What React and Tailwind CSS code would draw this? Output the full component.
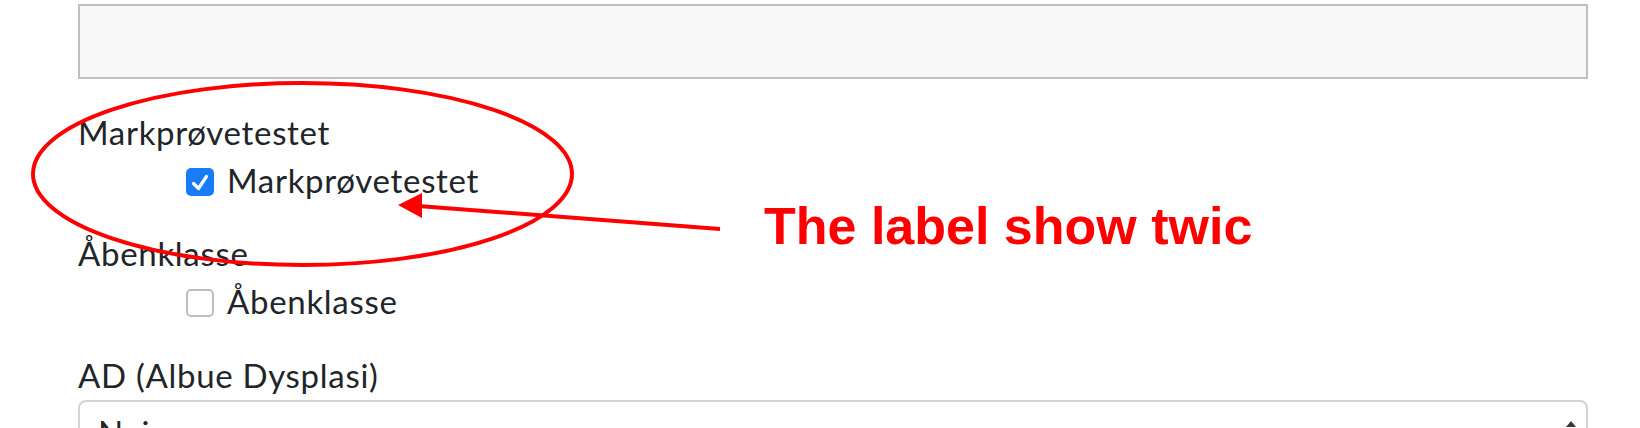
import React from "react";

const FIELDS = [
  { id: "markprove", label: "Markprøvetestet", checked: true },
  { id: "abenklasse", label: "Åbenklasse", checked: false },
];

function CheckBox({ checked }) {
  if (checked) {
    return (
      <span className="mt-[12px] w-[28px] h-[28px] shrink-0 rounded-[5px] bg-[#1a7cf5] flex items-center justify-center">
        <svg width="28" height="28" viewBox="0 0 28 28" fill="none">
          <path d="M7.5 15.5 L12.5 20.5 L20.5 8.5" stroke="#fff" strokeWidth="3.2" strokeLinecap="round" strokeLinejoin="round" />
        </svg>
      </span>
    );
  }
  return <span className="mt-[12px] w-[28px] h-[28px] shrink-0 rounded-[5px] border-2 border-[#bdbdbd] bg-white" />;
}

export default function App() {
  return (
    <div className="relative w-[1640px] h-[428px] overflow-hidden bg-white text-[#212529] font-['Lato',sans-serif]">
      {/* ── Form ── */}
      <div className="pl-[78px] pr-[52px] pt-[4px]">
        <div className="h-[75px] border-2 border-[#c0c0c0] bg-[#f8f8f8]" />

        {FIELDS.map((f, i) => (
          <div key={f.id} className={i === 0 ? "mt-[29px]" : "mt-[25px]"}>
            <div className="text-[33px] tracking-[0.7px] leading-[48px]">{f.label}</div>
            <label className="flex items-start gap-[13px] pl-[108px] text-[33px] tracking-[0.7px] leading-[48px]">
              <CheckBox checked={f.checked} />
              <span>{f.label}</span>
            </label>
          </div>
        ))}

        <div className="mt-[26px] text-[33px] tracking-[0.7px] leading-[48px]">AD (Albue Dysplasi)</div>
        <div className="mt-[1px] h-[76px] border-2 border-[#ced4da] rounded-[8px] pl-[18px] pr-[10px] pt-[6px] flex items-start justify-between">
          <span className="text-[33px] tracking-[0.7px] leading-[48px]">Nej</span>
          <svg width="10" height="24" viewBox="0 0 10 24" className="mt-[13px]">
            <path d="M5 0 L10 6 L0 6 Z" fill="#343a40" />
            <path d="M0 12 L10 12 L5 18 Z" fill="#343a40" />
          </svg>
        </div>
      </div>

      {/* ── Annotation overlay ── */}
      <svg className="absolute inset-0 pointer-events-none" width="1640" height="428" viewBox="0 0 1640 428">
        <ellipse cx="302.5" cy="174" rx="269.5" ry="91" fill="none" stroke="#ff0000" strokeWidth="4" />
        <line x1="720" y1="229" x2="418" y2="206" stroke="#ff0000" strokeWidth="4" />
        <polygon points="398,205 422,193 422,218" fill="#ff0000" />
      </svg>
      <div className="absolute left-[764px] top-[200px] text-[52px] leading-none font-bold text-[#ff0000] font-['Liberation_Sans',Arial,sans-serif] whitespace-nowrap">
        The label show twic
      </div>
    </div>
  );
}
